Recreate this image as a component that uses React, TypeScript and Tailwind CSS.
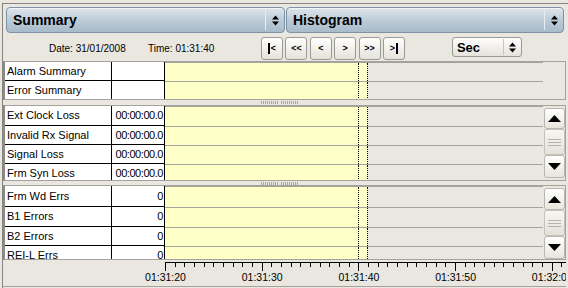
import React from 'react';

const ComboArrow = () => (
  <svg width="7" height="11" viewBox="0 0 7 11">
    <path d="M0 4.5 L3.5 0.5 L7 4.5 Z" fill="#000" />
    <path d="M0 6.5 L3.5 10.5 L7 6.5 Z" fill="#000" />
  </svg>
);

const HeaderCombo = ({ label, width }: { label: string; width: string }) => (
  <div
    className={`${width} flex h-[26px] items-center rounded-[4px] border border-[#7d93a6] bg-gradient-to-b from-[#dfe6ec] via-[#bccbd8] to-[#a8bbca] shadow-[inset_0_1px_0_#f2f5f8]`}
  >
    <span className="flex-1 pl-[6px] text-[14px] font-bold leading-none">{label}</span>
    <div className="flex h-[20px] w-[19px] items-center justify-center border-l border-[#e9eef2]">
      <ComboArrow />
    </div>
  </div>
);

const NavButton = ({ children }: { children: React.ReactNode }) => (
  <div className="flex h-[23px] w-[22px] items-center justify-center rounded-[3px] border border-[#9a9a94] bg-gradient-to-b from-[#ffffff] to-[#e4e2da] text-[9px] font-bold leading-none">
    {children}
  </div>
);

const Bar = () => <span className="inline-block h-[11px] w-[2px] bg-black" />;

const Triangle = ({ up }: { up?: boolean }) => (
  <svg width="13" height="7" viewBox="0 0 13 7">
    <path d={up ? 'M0 7 L6.5 0 L13 7 Z' : 'M0 0 L6.5 7 L13 0 Z'} fill="#000" />
  </svg>
);

const Scrollbar = ({ up, down }: { up: number; down: number }) => (
  <div className="flex w-[21px] flex-col">
    <div
      className="flex items-center justify-center rounded-[3px] border border-[#b8b6ae] bg-gradient-to-b from-[#ffffff] to-[#e7e5dd]"
      style={{ height: up }}
    >
      <Triangle up />
    </div>
    <div className="flex h-[26px] flex-col items-center justify-center gap-[2px] rounded-[2px] border border-[#c4c2ba] bg-gradient-to-b from-[#f7f6f2] to-[#e3e1d9]">
      <span className="h-px w-[13px] bg-[#b4b2aa]" />
      <span className="h-px w-[13px] bg-[#b4b2aa]" />
      <span className="h-px w-[13px] bg-[#b4b2aa]" />
    </div>
    <div
      className="flex items-center justify-center rounded-[3px] border border-[#b8b6ae] bg-gradient-to-b from-[#ffffff] to-[#e7e5dd]"
      style={{ height: down }}
    >
      <Triangle />
    </div>
  </div>
);

type Row = { name: string; value: string; h: number };

const Section = ({
  rows,
  height,
  scroll,
}: {
  rows: Row[];
  height: string;
  scroll?: { up: number; down: number };
}) => (
  <div className={`flex ${height} w-[563px] overflow-hidden border-y border-r border-l-2 border-y-[#a3a29c] border-r-[#a3a29c] border-l-[#8c8b86]`}>
    <div className="flex w-[538px] flex-col overflow-hidden">
      {rows.map((r) => (
        <div key={r.name} className="flex shrink-0" style={{ height: r.h }}>
          <div className="flex w-[107px] items-center border-r border-b border-black bg-white pl-[2px] text-[11px] leading-none whitespace-nowrap">
            {r.name}
          </div>
          <div className="flex w-[53px] items-center justify-end overflow-hidden border-r border-b border-black bg-white pr-[1px] text-[11px] leading-none tracking-[-0.45px] whitespace-nowrap">
            {r.value}
          </div>
          <div className="flex flex-1 border-t border-[#a3a29c]">
            <div className="w-[193px] bg-[#ffffc8]" />
            <div className="w-[10px] border-x border-dotted border-black bg-[#ffffc8]" />
            <div className="flex-1" />
          </div>
        </div>
      ))}
    </div>
    <div className="flex flex-1 justify-center pt-[2px]">
      {scroll && <Scrollbar up={scroll.up} down={scroll.down} />}
    </div>
  </div>
);

const Splitter = ({ h }: { h: string }) => (
  <div className={`flex ${h} w-[563px] items-center justify-center`}>
    <div className="flex gap-[2px] pr-[10px]">
      <span className="h-[3px] w-[18px] bg-[repeating-linear-gradient(90deg,#a8a7a0_0_1px,transparent_1px_2px)]" />
      <span className="h-[3px] w-[18px] bg-[repeating-linear-gradient(90deg,#a8a7a0_0_1px,transparent_1px_2px)]" />
    </div>
  </div>
);

const Axis = () => {
  const ticks = Array.from({ length: 42 }, (_, i) => i);
  const labels = ['01:31:20', '01:31:30', '01:31:40', '01:31:50', '01:32:00'];
  const x0 = 162;
  const step = 9.67;
  return (
    <div className="h-[27px] w-[563px] border-b border-[#a3a29c]">
      <svg width="563" height="26" viewBox="0 0 563 26">
        <line x1={x0} y1="2.5" x2="563" y2="2.5" stroke="#000" />
        {ticks.map((i) => {
          const x = Math.round(x0 + i * step) + 0.5;
          return <line key={i} x1={x} y1="2" x2={x} y2={i % 10 === 0 ? 11 : 7} stroke="#000" />;
        })}
        {labels.map((l, i) => (
          <text
            key={l}
            x={x0 + i * 10 * step + 0.5}
            y="21"
            textAnchor="middle"
            fontSize="10.5"
            fontFamily="'Liberation Sans', Arial, sans-serif"
            fill="#000"
          >
            {l}
          </text>
        ))}
      </svg>
    </div>
  );
};

const App: React.FC = () => {
  return (
    <div className="h-[288px] w-[568px] overflow-hidden bg-[#e9e7df] font-['Liberation_Sans',Arial,sans-serif] text-black">
      <div className="mt-[3px] ml-[2px] flex h-[285px] flex-col border-t border-l border-[#85847e]">
        <div className="flex gap-[1px] pt-[3px] pl-[3px]">
          <HeaderCombo label="Summary" width="w-[279px]" />
          <HeaderCombo label="Histogram" width="w-[278px]" />
        </div>

        <div className="mt-[4px] flex h-[23px] items-start">
          <div className="flex h-[23px] w-[258px] items-center pl-[46px] text-[10px] leading-none">
            <span className="w-[99px]">Date: 31/01/2008</span>
            <span>Time: 01:31:40</span>
          </div>
          <div className="flex gap-[2.4px]">
            <NavButton>
              <Bar />
              <span className="ml-[1px]">&lt;</span>
            </NavButton>
            <NavButton>&lt;&lt;</NavButton>
            <NavButton>&lt;</NavButton>
            <NavButton>&gt;</NavButton>
            <NavButton>&gt;&gt;</NavButton>
            <NavButton>
              <span className="mr-[1px]">&gt;</span>
              <Bar />
            </NavButton>
          </div>
          <div className="ml-[47px] flex h-[20px] w-[70px] items-center rounded-[3px] border border-[#9a9a94] bg-gradient-to-b from-[#ffffff] to-[#e4e2da]">
            <span className="flex-1 pl-[4px] text-[13px] font-bold leading-none">Sec</span>
            <div className="flex h-[16px] w-[18px] items-center justify-center border-l border-[#c9c7bf]">
              <ComboArrow />
            </div>
          </div>
        </div>

        <div className="mt-[1px]">
          <Section
            height="h-[39px]"
            rows={[
              { name: 'Alarm Summary', value: '', h: 19 },
              { name: 'Error Summary', value: '', h: 19 },
            ]}
          />
        </div>
        <Splitter h="h-[5px]" />
        <Section
          height="h-[76px]"
          scroll={{ up: 21, down: 23 }}
          rows={[
            { name: 'Ext Clock Loss', value: '00:00:00.0', h: 20 },
            { name: 'Invalid Rx Signal', value: '00:00:00.0', h: 19 },
            { name: 'Signal Loss', value: '00:00:00.0', h: 19 },
            { name: 'Frm Syn Loss', value: '00:00:00.0', h: 19 },
          ]}
        />
        <Splitter h="h-[4px]" />
        <Section
          height="h-[75px]"
          scroll={{ up: 22, down: 23 }}
          rows={[
            { name: 'Frm Wd Errs', value: '0', h: 21 },
            { name: 'B1 Errors', value: '0', h: 20 },
            { name: 'B2 Errors', value: '0', h: 19 },
            { name: 'REI-L Errs', value: '0', h: 19 },
          ]}
        />
        <Axis />
      </div>
    </div>
  );
};

export default App;
